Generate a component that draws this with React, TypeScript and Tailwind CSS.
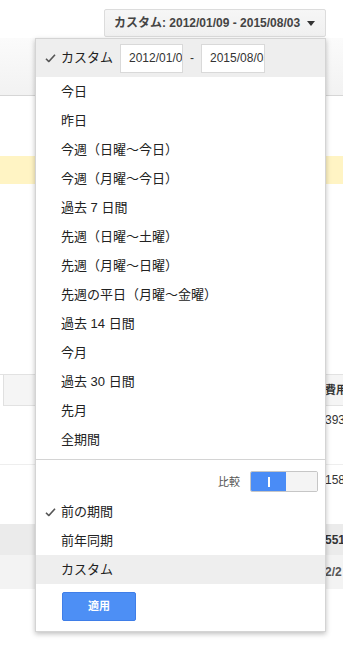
import React from 'react';

const font = { fontFamily: '"Liberation Sans", "Noto Sans CJK JP", sans-serif' };

const presets = [
  '今日',
  '昨日',
  '今週（日曜〜今日）',
  '今週（月曜〜今日）',
  '過去 7 日間',
  '先週（日曜〜土曜）',
  '先週（月曜〜日曜）',
  '先週の平日（月曜〜金曜）',
  '過去 14 日間',
  '今月',
  '過去 30 日間',
  '先月',
  '全期間',
];

const Check = () => (
  <svg width="11" height="9" viewBox="0 0 11 9" className="absolute left-[9px] top-1/2 -translate-y-1/2">
    <path d="M1 5.2 L3.8 8 L10 1.2" fill="none" stroke="#555" strokeWidth="1.6" />
  </svg>
);

const App: React.FC = () => {
  return (
    <div className="relative w-[343px] h-[645px] overflow-hidden bg-white text-[#222]" style={font}>
      {/* page behind the menu */}
      <div className="h-[38px] flex justify-end pt-[9px] pr-[17px]">
        <div className="w-[222px] h-[28px] flex items-center justify-between pl-[9px] pr-[10px] border border-[#dcdcdc] bg-gradient-to-b from-[#f6f6f6] to-[#f0f0f0] rounded-[2px]">
          <span className="text-[12px] font-bold text-[#444] whitespace-nowrap">カスタム: 2012/01/09 - 2015/08/03</span>
          <svg width="8" height="5" viewBox="0 0 8 5">
            <path d="M0 0 H8 L4 5 Z" fill="#333" />
          </svg>
        </div>
      </div>
      <div className="h-[58px] bg-gradient-to-b from-[#fbfbfb] to-[#f2f2f2] border-b border-[#d6d6d6]" />
      <div className="h-[60px]" />
      <div className="h-[28px] bg-[#fff4c4]" />
      <div className="h-[190px]" />
      <div className="border-t border-[#e2e2e2]">
        <div className="h-[31px] bg-[#f5f5f5] border-b border-[#e2e2e2] flex items-center pl-[324px] border-l border-l-[#e0e0e0] ml-[3px]">
          <span className="text-[11px] font-bold text-[#333] whitespace-nowrap -ml-[3px]">費用</span>
        </div>
        <div className="h-[59px] border-b border-[#eeeeee] pl-[325px] pt-[1px]">
          <span className="text-[12px] text-[#333]">393</span>
        </div>
        <div className="h-[59px] pl-[325px] pt-[2px]">
          <span className="text-[12px] text-[#333]">158</span>
        </div>
        <div className="h-[31px] bg-[#ebebeb] flex items-center pl-[325px]">
          <span className="text-[12px] font-bold text-[#333]">551</span>
        </div>
        <div className="h-[34px] bg-[#f3f3f3] flex items-center pl-[325px]">
          <span className="text-[12px] font-bold text-[#555]">2/2</span>
        </div>
      </div>

      {/* date range menu */}
      <div className="absolute left-[35px] top-[38px] w-[291px] h-[594px] bg-white border border-[#d4d4d4] shadow-[0_2px_5px_rgba(0,0,0,0.25)] flex flex-col">
        <div className="relative h-[38px] bg-[#eeeeee] flex items-center pl-[25px] text-[13px]">
          <Check />
          <span className="mr-[7px]">カスタム</span>
          <div className="w-[63px] h-[29px] bg-white border border-[#d9d9d9] flex items-center pl-[8px] overflow-hidden whitespace-nowrap text-[12px] text-[#333]">
            2012/01/09
          </div>
          <span className="w-[18px] text-center text-[12px] text-[#333]">-</span>
          <div className="w-[64px] h-[29px] bg-white border border-[#d9d9d9] flex items-center pl-[8px] overflow-hidden whitespace-nowrap text-[12px] text-[#333]">
            2015/08/03
          </div>
        </div>
        {presets.map((p) => (
          <div key={p} className="h-[29px] flex items-center pl-[25px] text-[13px] whitespace-nowrap">
            {p}
          </div>
        ))}
        <div className="mt-[5px] border-t border-[#d4d4d4]" />
        <div className="h-[37px] flex items-start justify-end pt-[11px] pr-[7px]">
          <span className="text-[11px] text-[#555] mr-[10px] mt-[3px]">比較</span>
          <div className="w-[68px] h-[21px] flex rounded-[2px] overflow-hidden border border-[#c6c6c6]">
            <div className="w-[35px] bg-[#4a8cf6] flex items-center justify-center">
              <div className="w-[2px] h-[10px] bg-white" />
            </div>
            <div className="flex-1 bg-[#f4f4f4]" />
          </div>
        </div>
        <div className="relative h-[29px] flex items-center pl-[25px] text-[13px]">
          <Check />
          前の期間
        </div>
        <div className="h-[29px] flex items-center pl-[25px] text-[13px]">前年同期</div>
        <div className="h-[29px] bg-[#eeeeee] flex items-center pl-[25px] text-[13px]">カスタム</div>
        <div className="pl-[26px] pt-[8px]">
          <button className="w-[74px] h-[29px] rounded-[2px] bg-[#4d8ff5] border border-[#3f7ee8] text-white text-[11px] font-bold">
            適用
          </button>
        </div>
      </div>
    </div>
  );
};

export default App;
